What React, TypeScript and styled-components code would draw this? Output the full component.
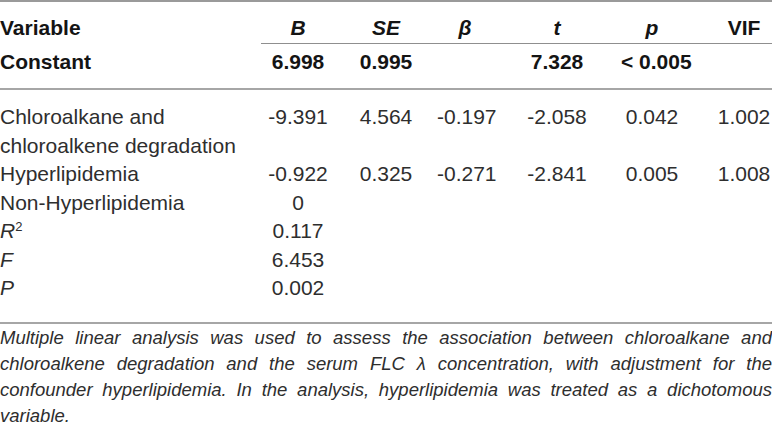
import React from "react";
import styled, { createGlobalStyle } from "styled-components";

const GlobalStyle = createGlobalStyle`
  html, body { margin: 0; padding: 0; background: #ffffff; }
  body { font-family: "Liberation Sans", Arial, Helvetica, sans-serif; }
`;

const COLS = "261px 74px 102px 56px 128px 62px 1fr";

const Page = styled.div`
  width: 772px;
  color: #2b2b2b;
`;

const Table = styled.div`
  border-top: 2px solid #9a9a9a;
  font-size: 21px;
  line-height: 28.5px;
`;

const Head = styled.div`
  padding-top: 12px;
  padding-bottom: 12px;
  border-bottom: 2px solid #a6a6a6;
`;

const Body = styled.div`
  padding-top: 13px;
  padding-bottom: 19px;
  border-bottom: 2px solid #a6a6a6;
`;

const Row = styled.div<{ $bold?: boolean; $gap?: number }>`
  display: grid;
  grid-template-columns: ${COLS};
  align-items: start;
  font-weight: ${(p) => (p.$bold ? 700 : 400)};
  color: ${(p) => (p.$bold ? "#141414" : "#2e2e2e")};
  margin-top: ${(p) => p.$gap ?? 0}px;
  & > :last-child { padding-left: 33px; }
`;

const Cell = styled.div<{ $left?: boolean; $rule?: boolean; $italic?: boolean }>`
  text-align: ${(p) => (p.$left ? "left" : "center")};
  font-style: ${(p) => (p.$italic ? "italic" : "normal")};
  white-space: ${(p) => (p.$left ? "normal" : "nowrap")};
  border-bottom: ${(p) => (p.$rule ? "1px solid #8f8f8f" : "none")};
  padding-right: ${(p) => (p.$left ? "10px" : "0")};
`;

const Sup = styled.sup`
  font-size: 13px;
  line-height: 0;
  font-style: normal;
  vertical-align: 7px;
`;

const Note = styled.p`
  margin: 0;
  padding-top: 1px;
  font-size: 18.5px;
  line-height: 26px;
  font-style: italic;
  text-align: justify;
  color: #2e2e2e;
`;

type DataRow = {
  label: React.ReactNode;
  values: string[];
};

const rows: DataRow[] = [
  {
    label: "Chloroalkane and chloroalkene degradation",
    values: ["-9.391", "4.564", "-0.197", "-2.058", "0.042", "1.002"],
  },
  {
    label: "Hyperlipidemia",
    values: ["-0.922", "0.325", "-0.271", "-2.841", "0.005", "1.008"],
  },
  { label: "Non-Hyperlipidemia", values: ["0", "", "", "", "", ""] },
  {
    label: (
      <i>
        R<Sup>2</Sup>
      </i>
    ),
    values: ["0.117", "", "", "", "", ""],
  },
  { label: <i>F</i>, values: ["6.453", "", "", "", "", ""] },
  { label: <i>P</i>, values: ["0.002", "", "", "", "", ""] },
];

const headers: { text: string; italic: boolean }[] = [
  { text: "B", italic: true },
  { text: "SE", italic: true },
  { text: "β", italic: true },
  { text: "t", italic: true },
  { text: "p", italic: true },
  { text: "VIF", italic: false },
];

export default function App() {
  return (
    <Page>
      <GlobalStyle />
      <Table>
        <Head>
          <Row $bold>
            <Cell $left>Variable</Cell>
            {headers.map((h) => (
              <Cell key={h.text} $rule $italic={h.italic}>
                {h.text}
              </Cell>
            ))}
          </Row>
          <Row $bold $gap={4}>
            <Cell $left>Constant</Cell>
            <Cell>6.998</Cell>
            <Cell>0.995</Cell>
            <Cell />
            <Cell>7.328</Cell>
            <Cell>&lt; 0.005</Cell>
            <Cell />
          </Row>
        </Head>
        <Body>
          {rows.map((r, i) => (
            <Row key={i}>
              <Cell $left>{r.label}</Cell>
              {r.values.map((v, j) => (
                <Cell key={j}>{v}</Cell>
              ))}
            </Row>
          ))}
        </Body>
      </Table>
      <Note>
        Multiple linear analysis was used to assess the association between
        chloroalkane and chloroalkene degradation and the serum FLC λ
        concentration, with adjustment for the confounder hyperlipidemia. In
        the analysis, hyperlipidemia was treated as a dichotomous variable.
      </Note>
    </Page>
  );
}
